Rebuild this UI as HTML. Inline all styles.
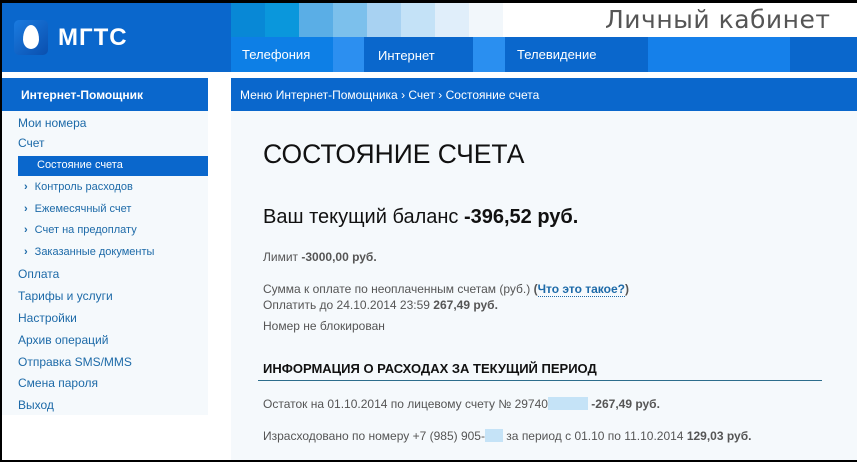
<!DOCTYPE html>
<html><head><meta charset="utf-8"><style>
*{margin:0;padding:0;box-sizing:border-box}
body{width:857px;height:462px;overflow:hidden;background:#fff;font-family:"Liberation Sans",Arial,sans-serif;position:relative}
.a{position:absolute}
.sb a{display:block;color:#1d6aa8;font-size:12px;text-decoration:none;position:absolute;left:18px}
.sub{left:24px!important;font-size:11px!important}
.sub:before{content:"›";font-weight:bold;margin-right:7px;color:#1d6aa8}
.c{color:#555;font-size:12px;position:absolute;left:263px}
</style></head><body>
<div class="a" style="left:0;top:0;width:857px;height:3px;background:#000"></div>
<div class="a" style="left:0;top:3px;width:2px;height:459px;background:#000"></div>
<div class="a" style="left:2px;top:3px;width:855px;height:69px;background:#0a67cc"></div>
<div class="a" style="left:231px;top:3px;width:626px;height:34px;background:#fff"></div>
<div class="a" style="left:231px;top:3px;width:34px;height:34px;background:#0888d6"></div>
<div class="a" style="left:265px;top:3px;width:34px;height:34px;background:#0a97dc"></div>
<div class="a" style="left:299px;top:3px;width:34px;height:34px;background:#5aaee6"></div>
<div class="a" style="left:333px;top:3px;width:34px;height:34px;background:#7cc0ec"></div>
<div class="a" style="left:367px;top:3px;width:34px;height:34px;background:#a8d2f2"></div>
<div class="a" style="left:401px;top:3px;width:34px;height:34px;background:#c4e2f7"></div>
<div class="a" style="left:435px;top:3px;width:34px;height:34px;background:#e0eefa"></div>
<div class="a" style="left:469px;top:3px;width:34px;height:34px;background:#f2f7fb"></div>
<div class="a" style="left:231px;top:37px;width:102px;height:35px;background:#0d7fe6"></div>
<div class="a" style="left:333px;top:37px;width:31px;height:35px;background:#2c8ff0"></div>
<div class="a" style="left:473px;top:37px;width:32px;height:35px;background:#2a8ff0"></div>
<div class="a" style="left:648px;top:37px;width:142px;height:35px;background:#1580ea"></div>
<div class="a" style="left:14px;top:20px;width:34px;height:35px;border-radius:5px;background:linear-gradient(135deg,#1a7be0,#0a4fae)"></div>
<div class="a" style="left:23px;top:25px;width:16px;height:24px;border-radius:50% 50% 50% 50%/60% 60% 40% 40%;background:#fff"></div>
<div class="a" style="left:58px;top:24px;color:#fff;font-size:24px;font-weight:bold;letter-spacing:1px">МГТС</div>
<div class="a" style="left:605px;top:5px;color:#555;font-family:'DejaVu Sans',sans-serif;font-size:25px;letter-spacing:0.5px">Личный кабинет</div>
<div class="a" style="left:242px;top:47px;color:#fff;font-size:13px">Телефония</div>
<div class="a" style="left:378px;top:48px;color:#fff;font-size:13px">Интернет</div>
<div class="a" style="left:517px;top:47px;color:#fff;font-size:13px">Телевидение</div>
<div class="a" style="left:2px;top:78px;width:206px;height:337px;background:#f5f9fc"></div>
<div class="a" style="left:2px;top:78px;width:206px;height:33px;background:#0a67cc"></div>
<div class="a" style="left:21px;top:88px;color:#fff;font-size:12px;font-weight:bold">Интернет-Помощник</div>
<div class="a" style="left:18px;top:156px;width:190px;height:20px;background:#0a67cc"></div>
<div class="sb">
<a style="top:116px">Мои номера</a>
<a style="top:136px">Счет</a>
<a style="top:159px;left:37px;color:#fff;font-size:11px">Состояние счета</a>
<a class="sub" style="top:181px">Контроль расходов</a>
<a class="sub" style="top:203px">Ежемесячный счет</a>
<a class="sub" style="top:224px">Счет на предоплату</a>
<a class="sub" style="top:246px">Заказанные документы</a>
<a style="top:267px">Оплата</a>
<a style="top:289px">Тарифы и услуги</a>
<a style="top:311px">Настройки</a>
<a style="top:333px">Архив операций</a>
<a style="top:355px">Отправка SMS/MMS</a>
<a style="top:376px">Смена пароля</a>
<a style="top:398px">Выход</a>
</div>
<div class="a" style="left:231px;top:78px;width:626px;height:384px;background:#f5f9fc"></div>
<div class="a" style="left:231px;top:78px;width:626px;height:33px;background:#0a67cc"></div>
<div class="a" style="left:240px;top:88px;color:#fff;font-size:12px">Меню Интернет-Помощника › Счет › Состояние счета</div>
<div class="a" style="left:263px;top:139px;color:#111;font-size:26.5px">СОСТОЯНИЕ СЧЕТА</div>
<div class="a" style="left:263px;top:206px;color:#111;font-size:20px">Ваш текущий баланс <b>-396,52 руб.</b></div>
<div class="c" style="top:250px">Лимит <b>-3000,00 руб.</b></div>
<div class="c" style="top:282px">Сумма к оплате по неоплаченным счетам (руб.) <b>(<span style="color:#1d6aa8;border-bottom:1px dotted #1d6aa8">Что это такое?</span>)</b></div>
<div class="c" style="top:298px">Оплатить до 24.10.2014 23:59 <b>267,49 руб.</b></div>
<div class="c" style="top:319px">Номер не блокирован</div>
<div class="a" style="left:263px;top:361px;color:#111;font-size:13px;font-weight:bold">ИНФОРМАЦИЯ О РАСХОДАХ ЗА ТЕКУЩИЙ ПЕРИОД</div>
<div class="a" style="left:258px;top:380px;width:564px;height:1px;background:#2d6d8c"></div>
<div class="c" style="top:397px">Остаток на 01.10.2014 по лицевому счету № 29740<span style="display:inline-block;width:40px;height:13px;background:#c5e3f7;vertical-align:-2px"></span> <b>-267,49 руб.</b></div>
<div class="c" style="top:429px">Израсходовано по номеру +7 (985) 905-<span style="display:inline-block;width:18px;height:13px;background:#c5e3f7;vertical-align:-2px"></span> за период с 01.10 по 11.10.2014 <b>129,03 руб.</b></div>
<div class="a" style="left:0;top:460px;width:857px;height:2px;background:#000"></div>
</body></html>
